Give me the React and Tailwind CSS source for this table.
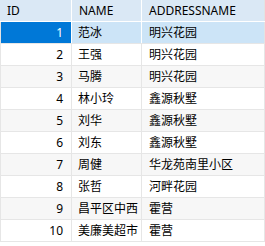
import React from "react";

const rows = [
  [1, "范冰", "明兴花园"],
  [2, "王强", "明兴花园"],
  [3, "马腾", "明兴花园"],
  [4, "林小玲", "鑫源秋墅"],
  [5, "刘华", "鑫源秋墅"],
  [6, "刘东", "鑫源秋墅"],
  [7, "周健", "华龙苑南里小区"],
  [8, "张哲", "河畔花园"],
  [9, "昌平区中西", "霍营"],
  [10, "美廉美超市", "霍营"],
];

export default function App() {
  return (
    <div
      className="w-[265px] h-[246px] bg-white text-[12px] text-black overflow-hidden"
      style={{ fontFamily: '"Noto Sans", "Noto Sans CJK SC", sans-serif' }}
    >
      <div className="flex h-[22px] bg-[#dae8f5] border-b border-white">
        <div className="w-[72px] border-r border-white pl-[7px] flex items-center leading-none">ID</div>
        <div className="w-[70px] border-r border-white pl-[7px] flex items-center leading-none">NAME</div>
        <div className="w-[123px] border-r border-[#e3e3e3] pl-[7px] flex items-center leading-none">ADDRESSNAME</div>
      </div>
      {rows.map(([id, name, addr], i) => {
        const sel = i === 0;
        const bg = sel ? "bg-[#cce4f7]" : i % 2 === 0 ? "bg-[#f7f7f7]" : "bg-white";
        return (
          <div key={id} className={`flex h-[22px] border-b border-[#e6e6e6] ${bg}`}>
            <div
              className={`w-[72px] border-l border-r pr-[8px] flex items-center justify-end leading-none ${
                sel ? "bg-[#0078d7] text-white border-l-[#e3e3e3] border-r-white" : "border-[#e6e6e6]"
              }`}
            >
              {id}
            </div>
            <div className={`w-[70px] border-r pl-[6px] flex items-center leading-none whitespace-nowrap ${sel ? "border-white" : "border-[#e6e6e6]"}`}>
              {name}
            </div>
            <div className={`w-[123px] border-r pl-[7px] flex items-center leading-none whitespace-nowrap ${sel ? "border-[#e3e3e3]" : "border-[#e6e6e6]"}`}>
              {addr}
            </div>
          </div>
        );
      })}
    </div>
  );
}
